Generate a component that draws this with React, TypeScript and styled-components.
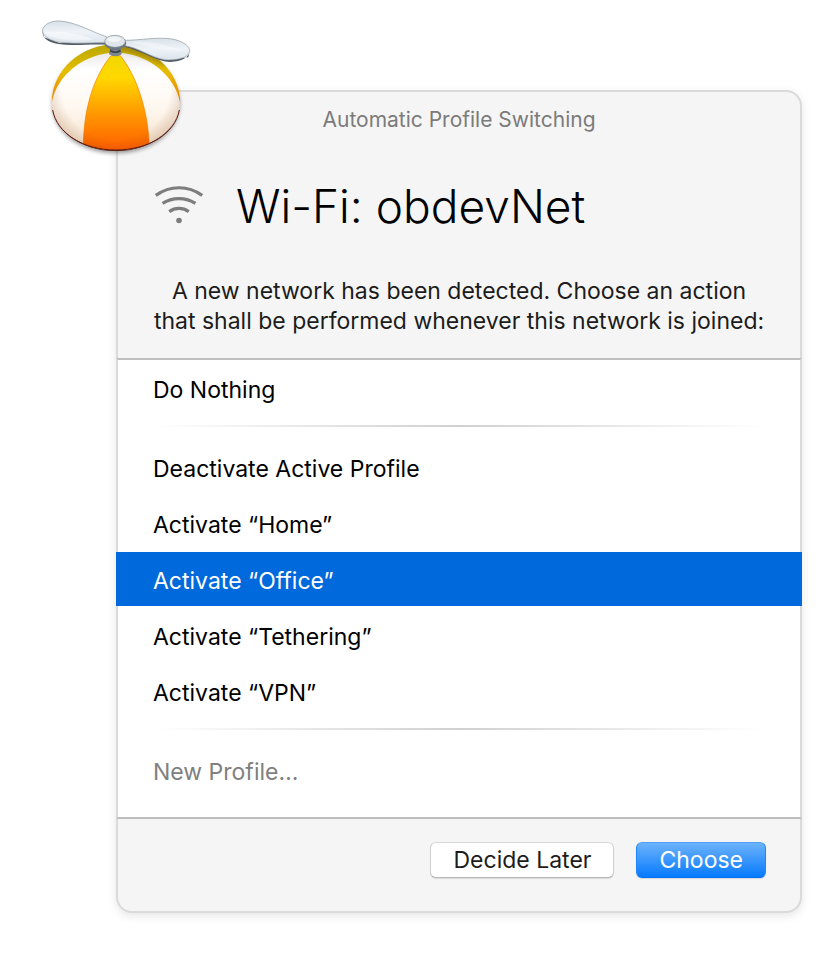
import { useState } from "react";
import styled, { createGlobalStyle } from "styled-components";

const GlobalStyle = createGlobalStyle`
  *, *::before, *::after { box-sizing: border-box; }
  body {
    margin: 0;
    background: #ffffff;
    color: #000000;
    font-family: Inter, "Noto Sans", sans-serif;
  }
`;

const Page = styled.main`
  min-height: 100vh;
  padding: 90px 38px 46px 116px;
`;

const Dialog = styled.section`
  position: relative;
  display: flex;
  flex-direction: column;
  border: 2px solid #dadada;
  border-radius: 16px;
  background: #f5f5f5;
  box-shadow: 0 3px 10px rgba(0, 0, 0, 0.1);
`;

const AppIcon = styled.svg`
  position: absolute;
  top: -82px;
  left: -88px;
  width: 170px;
  height: 150px;
`;

const Header = styled.header`
  display: flex;
  flex-direction: column;
  padding: 12px 32px 22px;
`;

const Caption = styled.h1`
  margin: 0;
  color: #7b7b7b;
  font-size: 21px;
  font-weight: 400;
  line-height: 32px;
  text-align: center;
`;

const Network = styled.div`
  display: flex;
  align-items: center;
  gap: 32px;
  margin-top: 40px;
  padding-left: 4px;
`;

const WifiIcon = styled.svg`
  width: 50px;
  height: 40px;
  flex: none;
`;

const NetworkName = styled.h2`
  margin: 0;
  font-size: 46px;
  font-weight: 300;
  line-height: 60px;
`;

const Message = styled.p`
  margin: 40px 0 0;
  color: #1c1c1c;
  font-size: 23px;
  line-height: 30px;
  text-align: center;
`;

const Actions = styled.div`
  display: flex;
  flex-direction: column;
  gap: 2px;
  margin: 0 -2px;
  padding: 1px 0 20px;
  border: solid #dadada;
  border-width: 0 2px;
  border-top: 2px solid #bebebe;
  border-bottom: 2px solid #bebebe;
  background: #ffffff;
`;

const ActionRow = styled.button<{ $selected?: boolean; $muted?: boolean }>`
  height: 54px;
  margin: 0 -2px;
  padding: 4px 37px 0;
  border: 0;
  background: ${(p) => (p.$selected ? "#0069db" : "transparent")};
  color: ${(p) => (p.$selected ? "#ffffff" : p.$muted ? "#808080" : "#000000")};
  font: inherit;
  font-size: 23px;
  line-height: 30px;
  text-align: left;
`;

const Separator = styled.hr`
  width: calc(100% - 72px);
  height: 2px;
  margin: 8px auto 11px;
  border: 0;
  background: linear-gradient(90deg, transparent, #d0d0d0 50%, transparent);
`;

const Footer = styled.footer`
  display: flex;
  justify-content: flex-end;
  gap: 22px;
  padding: 23px 34px 33px;
`;

const PushButton = styled.button<{ $primary?: boolean }>`
  height: 36px;
  padding: 0 22px;
  border: 1px solid;
  border-color: ${(p) => (p.$primary ? "#4ba0f8 #1f87fb #0071f5" : "#d8d8d8 #cfcfcf #b8b8b8")};
  border-radius: 6px;
  background: ${(p) => (p.$primary ? "linear-gradient(#6cb3fa, #067aff)" : "#ffffff")};
  box-shadow: 0 1px 1px rgba(0, 0, 0, 0.12);
  color: ${(p) => (p.$primary ? "#ffffff" : "#1c1c1c")};
  font: inherit;
  font-size: 23px;
  line-height: 30px;
`;

function PropellerCap() {
  return (
    <AppIcon viewBox="0 0 510 450" role="img" aria-label="Propeller cap">
      <defs>
        <linearGradient id="panel" x1="0" y1="0" x2="0" y2="1">
          <stop offset="0" stopColor="#efd800" />
          <stop offset="0.22" stopColor="#ffd800" />
          <stop offset="0.6" stopColor="#ff9700" />
          <stop offset="1" stopColor="#ff5a00" />
        </linearGradient>
        <linearGradient id="side" x1="0" y1="0" x2="0" y2="1">
          <stop offset="0" stopColor="#b7a600" />
          <stop offset="0.45" stopColor="#e5bd00" />
          <stop offset="1" stopColor="#ff8600" />
        </linearGradient>
        <linearGradient id="cloth" x1="0" y1="0" x2="0" y2="1">
          <stop offset="0" stopColor="#e4dddd" />
          <stop offset="0.25" stopColor="#ffffff" />
          <stop offset="0.6" stopColor="#fff8f0" />
          <stop offset="1" stopColor="#f3dfc8" />
        </linearGradient>
        <radialGradient id="rim" gradientUnits="userSpaceOnUse" cx="257" cy="225" r="200">
          <stop offset="0.82" stopColor="#793000" stopOpacity="0" />
          <stop offset="1" stopColor="#793000" stopOpacity="0.14" />
        </radialGradient>
        <linearGradient id="blade" x1="0" y1="0" x2="0" y2="1">
          <stop offset="0" stopColor="#d9e2e9" />
          <stop offset="0.5" stopColor="#eef3f8" />
          <stop offset="1" stopColor="#dbe3eb" />
        </linearGradient>
        <filter id="capShadow" x="-20%" y="-20%" width="140%" height="150%">
          <feDropShadow dx="0" dy="6" stdDeviation="7" floodColor="#000000" floodOpacity="0.42" />
        </filter>
        <filter id="bladeShadow" x="-20%" y="-40%" width="140%" height="200%">
          <feGaussianBlur stdDeviation="7" />
        </filter>
        <clipPath id="dome">
          <path d="M257 103 C155 103 66 178 65 278 C68 360 154 421 257 421 C360 421 446 360 451 278 C449 178 359 103 257 103Z" />
        </clipPath>
      </defs>
      <path
        d="M257 108 C155 108 68 182 67 278 C68 362 154 423 257 423 C360 423 446 362 449 278 C447 182 359 108 257 108Z"
        fill="#4a1710"
        filter="url(#capShadow)"
      />
      <g clipPath="url(#dome)">
        <path d="M64 100H452V421H64Z" fill="url(#cloth)" />
        <path d="M64 290 C70 213 143 136 246 128 L238 98 H60Z" fill="url(#side)" />
        <path d="M452 290 C445 213 372 136 269 128 L277 98 H455Z" fill="url(#side)" />
        <path
          d="M243 137 C199 190 163 278 160 400 V430 H357 V390 C350 285 314 189 271 137Z"
          fill="url(#panel)"
          stroke="#f27b00"
          strokeWidth="2"
        />
        <path d="M64 100H452V425H64Z" fill="url(#rim)" />
        <path d="M260 119 C330 124 385 175 440 166 L448 145 L275 98Z" fill="#51302a" opacity="0.28" filter="url(#bladeShadow)" />
      </g>
      <path
        d="M68 300 C80 370 160 420 257 420 C356 420 436 370 448 300"
        fill="none"
        stroke="#601a0b"
        strokeWidth="3"
      />
      <path d="M241 110 H272 L274 132 Q257 145 238 132Z" fill="#626b75" />
      <ellipse cx="256" cy="129" rx="19" ry="9" fill="#7d8790" />
      <path d="M241 122 Q256 131 271 122" fill="none" stroke="#38414a" strokeWidth="5" />
      <path
        d="M230 104 C177 101 130 109 85 102 C54 97 36 82 38 65 L43 82 L88 99 L230 95Z M282 110 C326 119 366 145 402 154 C444 161 478 145 479 124 L475 142 L407 150 L283 101Z"
        fill="#4f5962"
      />
      <path
        d="M229 80 C187 67 135 34 86 33 C54 33 35 50 38 66 C42 82 66 94 92 97 C139 103 185 97 230 99Z"
        fill="url(#blade)"
        stroke="#8b949b"
        strokeWidth="2"
      />
      <path
        d="M282 91 C333 91 381 80 426 87 C460 94 480 108 479 124 C477 142 441 153 404 149 C362 143 323 111 282 107Z"
        fill="url(#blade)"
        stroke="#8b949b"
        strokeWidth="2"
      />
      <path d="M44 67 C95 59 147 73 193 88 C144 95 97 92 68 81 Q49 74 44 67Z" fill="#ffffff" opacity="0.45" />
      <path d="M300 96 C358 93 394 101 469 124 C422 120 387 119 362 112Z" fill="#ffffff" opacity="0.35" />
      <ellipse cx="256" cy="99" rx="33" ry="20" fill="#6e7881" />
      <ellipse cx="255" cy="94" rx="31" ry="18" fill="#dfe5ea" stroke="#858e96" strokeWidth="2" />
      <ellipse cx="252" cy="88" rx="20" ry="8" fill="#f2f5f7" />
    </AppIcon>
  );
}

function Wifi() {
  return (
    <WifiIcon viewBox="0 0 50 40" aria-hidden="true">
      <g fill="none" stroke="#7d7d7d" strokeWidth="3.2">
        <path d="M1.8 9.4 C16 -0.8 34 -0.8 48.2 9.4" />
        <path d="M8.6 17.4 C18 10.9 32 10.9 41.4 17.4" />
        <path d="M15.2 25.6 C21 21.4 29 21.4 34.8 25.6" />
      </g>
      <circle cx="25" cy="34.5" r="2.8" fill="#7d7d7d" />
    </WifiIcon>
  );
}

const profileActions = [
  "Deactivate Active Profile",
  "Activate “Home”",
  "Activate “Office”",
  "Activate “Tethering”",
  "Activate “VPN”",
];

export default function App() {
  const [selected, setSelected] = useState("Activate “Office”");

  const renderAction = (label: string, muted = false) => (
    <ActionRow
      key={label}
      type="button"
      aria-pressed={selected === label}
      $selected={selected === label}
      $muted={muted}
      onClick={() => setSelected(label)}
    >
      {label}
    </ActionRow>
  );

  return (
    <>
      <GlobalStyle />
      <Page>
        <Dialog role="dialog" aria-labelledby="dialog-title">
          <Header>
            <Caption id="dialog-title">Automatic Profile Switching</Caption>
            <Network>
              <Wifi />
              <NetworkName>Wi-Fi: obdevNet</NetworkName>
            </Network>
            <Message>
              A new network has been detected. Choose an action
              <br />
              that shall be performed whenever this network is joined:
            </Message>
          </Header>
          <Actions role="group" aria-label="Network action">
            {renderAction("Do Nothing")}
            <Separator />
            {profileActions.map((label) => renderAction(label))}
            <Separator />
            {renderAction("New Profile…", true)}
          </Actions>
          <Footer>
            <PushButton type="button">Decide Later</PushButton>
            <PushButton type="button" $primary>
              Choose
            </PushButton>
          </Footer>
          <PropellerCap />
        </Dialog>
      </Page>
    </>
  );
}
